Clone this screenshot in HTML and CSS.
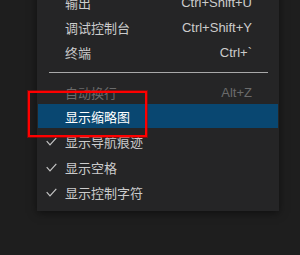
FILE: index.html
```html
<!DOCTYPE html>
<html lang="zh-CN">
<head>
<meta charset="utf-8">
<link rel="stylesheet" href="styles.css">
</head>
<body>
<div class="menu">
  <div class="item"><span class="check"></span><span class="label">输出</span><span class="key">Ctrl+Shift+U</span></div>
  <div class="item"><span class="check"></span><span class="label">调试控制台</span><span class="key">Ctrl+Shift+Y</span></div>
  <div class="item"><span class="check"></span><span class="label">终端</span><span class="key">Ctrl+`</span></div>
  <div class="sep"></div>
  <div class="item disabled"><span class="check"></span><span class="label">自动换行</span><span class="key">Alt+Z</span></div>
  <div class="item active"><span class="check"></span><span class="label">显示缩略图</span><span class="key"></span></div>
  <div class="item"><span class="check"><svg viewBox="0 0 11 9" width="11" height="9"><polyline points="0.7,4.2 4,7.8 10.3,0.8" fill="none" stroke="#c5c5c5" stroke-width="1.2"/></svg></span><span class="label">显示导航痕迹</span><span class="key"></span></div>
  <div class="item"><span class="check"><svg viewBox="0 0 11 9" width="11" height="9"><polyline points="0.7,4.2 4,7.8 10.3,0.8" fill="none" stroke="#c5c5c5" stroke-width="1.2"/></svg></span><span class="label">显示空格</span><span class="key"></span></div>
  <div class="item"><span class="check"><svg viewBox="0 0 11 9" width="11" height="9"><polyline points="0.7,4.2 4,7.8 10.3,0.8" fill="none" stroke="#c5c5c5" stroke-width="1.2"/></svg></span><span class="label">显示控制字符</span><span class="key"></span></div>
</div>
<div class="mark"></div>
</body>
</html>
```
FILE: styles.css
```css
html, body {
  margin: 0;
  padding: 0;
  background: #1e1e1e;
  width: 300px;
  height: 255px;
  overflow: hidden;
}
body {
  position: relative;
  font-family: "Liberation Sans", "Noto Sans CJK SC", sans-serif;
  font-size: 13px;
  color: #cccccc;
}
.menu {
  margin-top: -11px;
  margin-left: 37px;
  width: 240px;
  padding: 0 1px 7px 1px;
  background: #252526;
  box-shadow: 0 2px 8px rgba(0, 0, 0, 0.5);
}
.item {
  display: grid;
  grid-template-columns: 27px 1fr auto;
  align-items: center;
  height: 25px;
  padding-right: 26px;
}
.item.active {
  height: 24px;
  background: #094771;
  color: #ffffff;
}
.item.active + .item {
  height: 26px;
}
.item.disabled {
  color: #6b6b6b;
}
.check {
  display: flex;
  align-items: center;
  padding-left: 8px;
  padding-top: 1px;
}
.check svg {
  display: block;
}
.label {
  white-space: nowrap;
  padding-top: 1px;
}
.key {
  white-space: nowrap;
  padding-top: 1px;
}
.sep {
  height: 1px;
  margin: 8px 10px 6px 11px;
  background: #a9a9a9;
}
.mark {
  position: absolute;
  left: 28px;
  top: 91px;
  width: 115px;
  height: 42px;
  border: 2px solid #ff0000;
  box-shadow: 0 0 0 1px rgba(190, 0, 0, 0.55);
}
```
